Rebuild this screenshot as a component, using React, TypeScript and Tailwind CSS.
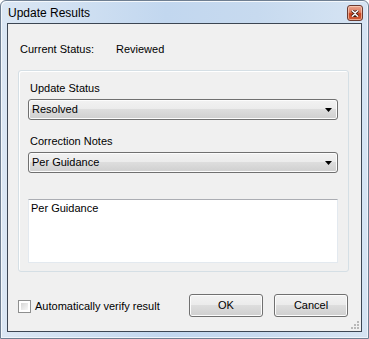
import React from "react";

const font = { fontFamily: '"Liberation Sans", Arial, sans-serif' };

function Combo({ value }: { value: string }) {
  return (
    <div className="flex h-[21px] w-[310px] items-center justify-between rounded-[3px] border border-[#707070] bg-[linear-gradient(#f2f2f2_0%,#ebebeb_50%,#dddddd_50%,#cfcfcf_100%)] pl-[3px] pr-[4px] shadow-[inset_0_0_0_1px_#fcfcfc]">
      <span className="h-[13px] text-[11px] leading-[13px] text-black">{value}</span>
      <svg width="7" height="4" viewBox="0 0 7 4" className="mr-[1px]">
        <path d="M0 0h7L3.5 4z" fill="#000" />
      </svg>
    </div>
  );
}

function Button({ label }: { label: string }) {
  return (
    <button className="flex h-[23px] w-[74px] items-center justify-center rounded-[3px] border border-[#707070] bg-[linear-gradient(#f2f2f2_0%,#ebebeb_50%,#dddddd_50%,#cfcfcf_100%)] text-[11px] leading-[13px] text-black shadow-[inset_0_0_0_1px_#fcfcfc]">
      {label}
    </button>
  );
}

export default function App() {
  return (
    <div style={font} className="h-[339px] w-[369px] bg-white">
      <div className="flex h-full w-full flex-col rounded-t-[6px] border border-[#6f7f92] bg-[linear-gradient(90deg,#dbe7f4_0%,#c2d7ef_45%,#c7daef_70%,#d6e4f3_100%)] px-[6px] pb-[6px] shadow-[inset_1px_1px_0_#f4f8fc,inset_-1px_-1px_0_#eef4fa]">
        {/* title bar */}
        <div className="flex h-[22px] shrink-0 items-start justify-between">
          <span className="ml-[1px] mt-[5px] h-[14px] text-[12px] leading-[14px] text-black">
            Update Results
          </span>
          <div className="mr-[-1px] mt-[4px] flex h-[16px] w-[16px] items-center justify-center rounded-[3px] border border-[#6b3a30] bg-[linear-gradient(#eaa58f_0%,#dc7a5e_45%,#c4401c_55%,#d0603c_100%)] shadow-[inset_0_0_0_1px_rgba(255,220,200,0.6)]">
            <svg width="8" height="7" viewBox="0 0 8 7">
              <path
                d="M1 0.5L4 3L7 0.5M1 6.5L4 4L7 6.5"
                stroke="#3a1a10"
                strokeWidth="3"
                fill="none"
              />
              <path
                d="M1 0.5L4 3L7 0.5M1 6.5L4 4L7 6.5"
                stroke="#fff"
                strokeWidth="1.6"
                fill="none"
              />
            </svg>
          </div>
        </div>

        {/* client area */}
        <div className="flex flex-1 flex-col border border-[#3c4653] bg-[#f0f0f0]">
          <div className="mt-[19px] flex h-[13px] pl-[12px] text-[11px] leading-[13px] text-black">
            <span className="w-[96px]">Current Status:</span>
            <span>Reviewed</span>
          </div>

          <div className="ml-[10px] mt-[14px] flex h-[202px] w-[331px] flex-col rounded-[3px] border border-[#d5dfe5] pl-[9px] shadow-[inset_1px_1px_0_#ffffff]">
            <span className="ml-[2px] mt-[11px] h-[13px] text-[11px] leading-[13px] text-black">
              Update Status
            </span>
            <div className="mt-[4px]">
              <Combo value="Resolved" />
            </div>
            <span className="ml-[2px] mt-[15px] h-[13px] text-[11px] leading-[13px] text-black">
              Correction Notes
            </span>
            <div className="mt-[4px]">
              <Combo value="Per Guidance" />
            </div>
            <div className="mt-[26px] h-[64px] w-[310px] border border-[#e3e9ef] border-t-[#abadb3] bg-white pl-[2px] pt-[2px]">
              <span className="block h-[13px] text-[11px] leading-[13px] text-black">
                Per Guidance
              </span>
            </div>
          </div>

          <div className="mt-[22px] flex items-start pl-[10px]">
            <div className="mt-[6px] flex items-center">
              <div className="h-[13px] w-[13px] border border-[#8e8f8f] bg-white p-[2px]">
                <div className="h-full w-full bg-[linear-gradient(135deg,#d6d6d6,#f8f8f8)]" />
              </div>
              <span className="ml-[4px] h-[13px] text-[11px] leading-[13px] text-black">
                Automatically verify result
              </span>
            </div>
            <div className="ml-auto mr-[13px] flex gap-[11px]">
              <Button label="OK" />
              <Button label="Cancel" />
            </div>
          </div>

          <div className="mt-auto flex justify-end pb-[1px] pr-[1px]">
            <svg width="10" height="10" viewBox="0 0 10 10">
              <g fill="#b8b8b8">
                <rect x="7" y="1" width="2" height="2" />
                <rect x="4" y="4" width="2" height="2" />
                <rect x="7" y="4" width="2" height="2" />
                <rect x="1" y="7" width="2" height="2" />
                <rect x="4" y="7" width="2" height="2" />
                <rect x="7" y="7" width="2" height="2" />
              </g>
            </svg>
          </div>
        </div>
      </div>
    </div>
  );
}
